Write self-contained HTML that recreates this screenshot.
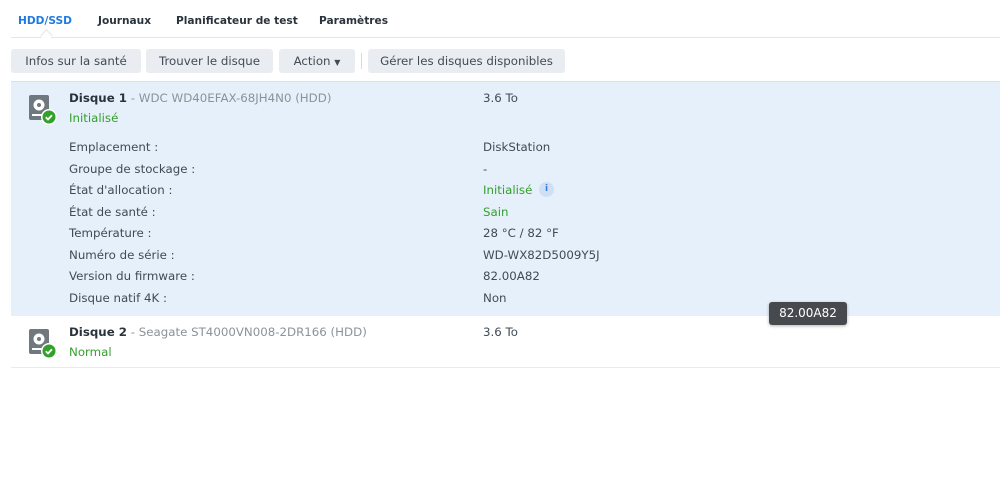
<!DOCTYPE html>
<html><head><meta charset="utf-8"><style>
body{margin:0;width:1000px;height:478px;background:#fff;font-family:"DejaVu Sans","Liberation Sans",sans-serif;font-size:11.8px;color:#414b55;position:relative;overflow:hidden}
.a{position:absolute;white-space:nowrap}
.tab{font-weight:bold;font-size:10.6px;color:#2a333c;top:15px}
.btn{position:absolute;top:49px;height:24px;background:#e9edf1;border-radius:3px;line-height:24px;text-align:center;color:#414b55;font-size:11.8px}
.g{color:#34a02c}
.gray{color:#8a9399}
</style></head><body>
<div class="a tab" style="left:18px;color:#1e7ae0">HDD/SSD</div>
<div class="a tab" style="left:98px">Journaux</div>
<div class="a tab" style="left:176px">Planificateur de test</div>
<div class="a tab" style="left:319px">Paramètres</div>
<div class="a" style="left:11px;top:37px;width:989px;height:1px;background:#e3e7eb"></div>
<div class="a" style="left:42px;top:31px;width:8px;height:8px;background:#fff;border-left:1px solid #e3e7eb;border-top:1px solid #e3e7eb;transform:rotate(45deg)"></div>

<div class="btn" style="left:11px;width:130px">Infos sur la santé</div>
<div class="btn" style="left:146px;width:127px">Trouver le disque</div>
<div class="btn" style="left:279px;width:76px">Action <span style="font-size:8px">▼</span></div>
<div class="a" style="left:361px;top:53px;width:1px;height:16px;background:#d5dbe0"></div>
<div class="btn" style="left:368px;width:197px">Gérer les disques disponibles</div>

<div class="a" style="left:11px;top:81px;width:989px;height:234px;background:#e6f0fa;border-top:1px solid #d5e2ee"></div>
<div class="a" style="left:11px;top:367px;width:989px;height:1px;background:#e6ebf0"></div>

<svg class="a" style="left:27px;top:94px" width="32" height="32" viewBox="0 0 32 32">
<rect x="2" y="1" width="20" height="25" rx="2" fill="#6f787f"/>
<circle cx="12" cy="11" r="5.5" fill="#fff"/><circle cx="12" cy="11" r="2" fill="#6f787f"/>
<rect x="5" y="20" width="14" height="2" fill="#fff"/>
<circle cx="22" cy="23" r="8" fill="#fff"/><circle cx="22" cy="23" r="6.5" fill="#34a02c"/>
<path d="M18.8 23.2l2.2 2.2 4-4.2" stroke="#fff" stroke-width="1.8" fill="none"/>
</svg>
<svg class="a" style="left:27px;top:328px" width="32" height="32" viewBox="0 0 32 32">
<rect x="2" y="1" width="20" height="25" rx="2" fill="#6f787f"/>
<circle cx="12" cy="11" r="5.5" fill="#fff"/><circle cx="12" cy="11" r="2" fill="#6f787f"/>
<rect x="5" y="20" width="14" height="2" fill="#fff"/>
<circle cx="22" cy="23" r="8" fill="#fff"/><circle cx="22" cy="23" r="6.5" fill="#34a02c"/>
<path d="M18.8 23.2l2.2 2.2 4-4.2" stroke="#fff" stroke-width="1.8" fill="none"/>
</svg>

<div class="a" style="left:69px;top:91px"><b style="color:#2a333c">Disque 1</b> <span class="gray">- WDC WD40EFAX-68JH4N0 (HDD)</span></div>
<div class="a g" style="left:69px;top:111px">Initialisé</div>
<div class="a" style="left:483px;top:91px">3.6 To</div>

<div class="a" style="left:69px;top:137px;line-height:21.5px">Emplacement :<br>Groupe de stockage :<br>État d'allocation :<br>État de santé :<br>Température :<br>Numéro de série :<br>Version du firmware :<br>Disque natif 4K :</div>
<div class="a" style="left:483px;top:137px;line-height:21.5px">DiskStation<br>-<br><span class="g">Initialisé</span><br><span class="g">Sain</span><br>28 °C / 82 °F<br>WD-WX82D5009Y5J<br>82.00A82<br>Non</div>
<div class="a" style="left:539px;top:182px;width:15px;height:15px;border-radius:50%;background:#cfe0f5;color:#3a7bd5;font-size:9px;font-weight:bold;text-align:center;line-height:15px">i</div>

<div class="a" style="left:69px;top:325px"><b style="color:#2a333c">Disque 2</b> <span class="gray">- Seagate ST4000VN008-2DR166 (HDD)</span></div>
<div class="a g" style="left:69px;top:345px">Normal</div>
<div class="a" style="left:483px;top:325px">3.6 To</div>

<div class="a" style="left:769px;top:302px;width:78px;height:23px;background:#464a4f;border-radius:3px;color:#fff;text-align:center;line-height:23px;font-size:12px;box-shadow:0 1px 3px rgba(0,0,0,.3)">82.00A82</div>
</body></html>
